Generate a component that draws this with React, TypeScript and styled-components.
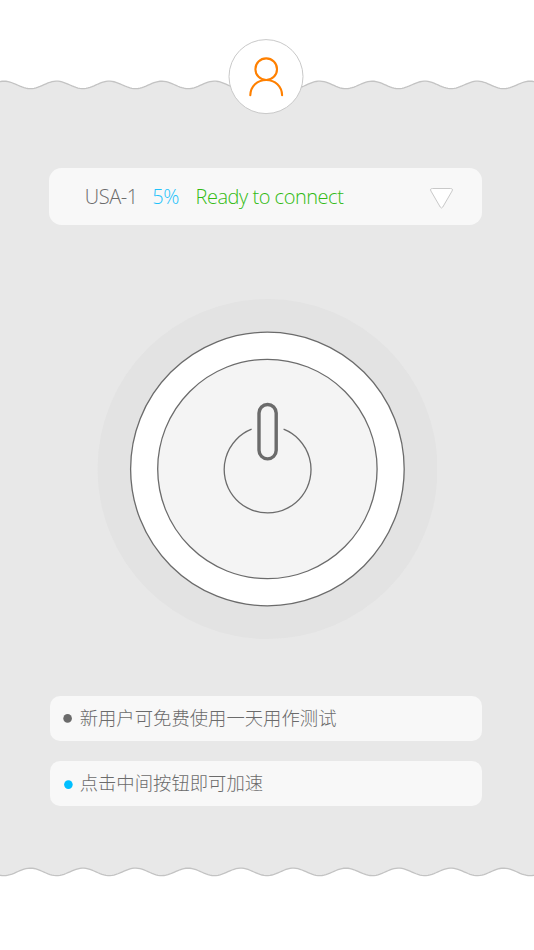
import React from "react";
import styled, { createGlobalStyle } from "styled-components";

const GlobalStyle = createGlobalStyle`
  * { box-sizing: border-box; }
  body { margin: 0; background: #fff; }
`;

const Screen = styled.main`
  width: 534px;
  height: 950px;
  display: flex;
  flex-direction: column;
  overflow: hidden;
  background: #fff;
  color: #6b6b6b;
  font-family: "Open Sans", "Noto Sans CJK SC", sans-serif;
  font-weight: 300;
`;

const Header = styled.header`
  position: relative;
  height: 95px;
  flex: none;
  display: flex;
  align-items: flex-end;
`;

const WaveSvg = styled.svg`
  display: block;
  flex: none;
`;

const Avatar = styled.button`
  position: absolute;
  left: 228px;
  top: 39px;
  width: 76px;
  height: 76px;
  padding: 0;
  border: 0;
  background: none;
`;

const Content = styled.section`
  flex: none;
  height: 765px;
  padding: 73px 52px 0 50px;
  display: flex;
  flex-direction: column;
  background: #e8e8e8;
`;

const ServerCard = styled.div`
  height: 56.5px;
  flex: none;
  margin-left: -0.6px;
  border-radius: 12.5px;
  background: #f8f8f8;
  display: flex;
  align-items: center;
  padding: 0 28px 0 35.3px;
  font-size: 20px;
  line-height: 28px;
`;

const Label = styled.span<{ $color: string; $width: number; $spacing: number }>`
  width: ${(p) => p.$width}px;
  flex: none;
  padding-top: 2px;
  color: ${(p) => p.$color};
  letter-spacing: ${(p) => p.$spacing}px;
  white-space: nowrap;
`;

const Arrow = styled.svg`
  display: block;
  margin-left: auto;
  margin-top: 4px;
`;

const Dial = styled.button`
  align-self: center;
  width: 342px;
  height: 342px;
  flex: none;
  margin: 73.5px 0 56px;
  padding: 0;
  border: 0;
  background: none;
  svg { display: block; }
`;

const Tips = styled.ul`
  list-style: none;
  margin: 0;
  padding: 0;
  display: flex;
  flex-direction: column;
  gap: 20px;
`;

const Tip = styled.li<{ $inset: number }>`
  height: 45px;
  padding-left: ${(p) => p.$inset}px;
  display: flex;
  align-items: center;
  border-radius: 10px;
  background: #f8f8f8;
`;

const DotSvg = styled.svg`
  display: block;
  flex: none;
`;

const TipText = styled.span`
  margin-left: 6.7px;
  padding-bottom: 3px;
  color: #6b6b6b;
  font-family: "Noto Sans CJK SC", sans-serif;
  font-size: 18.35px;
  line-height: 26px;
`;

const PERIOD = 52.6;

/* Cosine edge; dir = -1 puts the first crest at the top, 1 at the bottom. */
function wavePath(mid: number, dir: 1 | -1) {
  const points: string[] = [];
  for (let x = -4; x <= 538; x += 2) {
    const y = mid + dir * 3.75 * Math.cos(((x - 4) / PERIOD) * 2 * Math.PI);
    points.push(`${x} ${y.toFixed(2)}`);
  }
  return "M" + points.join("L");
}

function Wave({ bottom = false }: { bottom?: boolean }) {
  const line = wavePath(bottom ? 11.9 : 9.9, bottom ? 1 : -1);
  return (
    <WaveSvg width="534" height="20" viewBox="0 0 534 20">
      <path d={line + (bottom ? "V-3H-4Z" : "V23H-4Z")} fill="#e8e8e8" />
      <path d={line} fill="none" stroke="#c3c3c3" strokeWidth="1.3" />
    </WaveSvg>
  );
}

function Dot({ color, cx, cy }: { color: string; cx: number; cy: number }) {
  return (
    <DotSvg width="11" height="11" viewBox="0 0 11 11">
      <circle cx={cx} cy={cy} r="4.3" fill={color} />
    </DotSvg>
  );
}

export default function App() {
  return (
    <>
      <GlobalStyle />
      <Screen>
        <Header>
          <Wave />
          <Avatar aria-label="Account">
            <svg width="76" height="76" viewBox="0 0 76 76" fill="none">
              <circle cx="38" cy="37.6" r="37" fill="#fff" stroke="#c9c9c9" />
              <g stroke="#ff8000" strokeWidth="2.1" strokeLinecap="round">
                <circle cx="38.2" cy="30.2" r="10.8" />
                <path d="M22.3 56.2C22.6 47.5 29.2 41 38.2 41S53.8 47.5 54.1 56.2" />
              </g>
            </svg>
          </Avatar>
        </Header>
        <Content>
          <ServerCard>
            <Label $color="#6b6b6b" $width={67.6} $spacing={-0.4}>USA-1</Label>
            <Label $color="#1fc2fa" $width={43.2} $spacing={-0.4}>5%</Label>
            <Label $color="#33bb14" $width={160} $spacing={-0.47}>Ready to connect</Label>
            <Arrow width="25" height="23" viewBox="0 0 25 23">
              <path
                d="M3.6 1.5H21.4Q24.4 1.5 23 4.1L13.8 20Q12.5 22 11.2 20L2 4.1Q.6 1.5 3.6 1.5Z"
                fill="#fff"
                stroke="#c9c9c9"
              />
            </Arrow>
          </ServerCard>
          <Dial aria-label="Connect">
            <svg width="342" height="342" viewBox="95 298 342 342" fill="none">
              <circle cx="267.5" cy="469" r="170" fill="#e3e3e3" />
              <g stroke="#6b6b6b" strokeWidth="1.3">
                <circle cx="267.4" cy="469" r="136.8" fill="#fff" />
                <circle cx="267.4" cy="469" r="109.7" fill="#f4f4f4" />
                <path d="M251.6 429.2A43.4 43.4 0 1 0 283.6 429.2" />
              </g>
              <rect x="259" y="404.5" width="17.2" height="54.4" rx="8.6" stroke="#6b6b6b" strokeWidth="3.4" />
            </svg>
          </Dial>
          <Tips>
            <Tip $inset={12}>
              <Dot color="#6b6b6b" cx={5.6} cy={5.4} />
              <TipText>新用户可免费使用一天用作测试</TipText>
            </Tip>
            <Tip $inset={12}>
              <Dot color="#00bfff" cx={6.4} cy={6.6} />
              <TipText>点击中间按钮即可加速</TipText>
            </Tip>
          </Tips>
        </Content>
        <Wave bottom />
      </Screen>
    </>
  );
}
